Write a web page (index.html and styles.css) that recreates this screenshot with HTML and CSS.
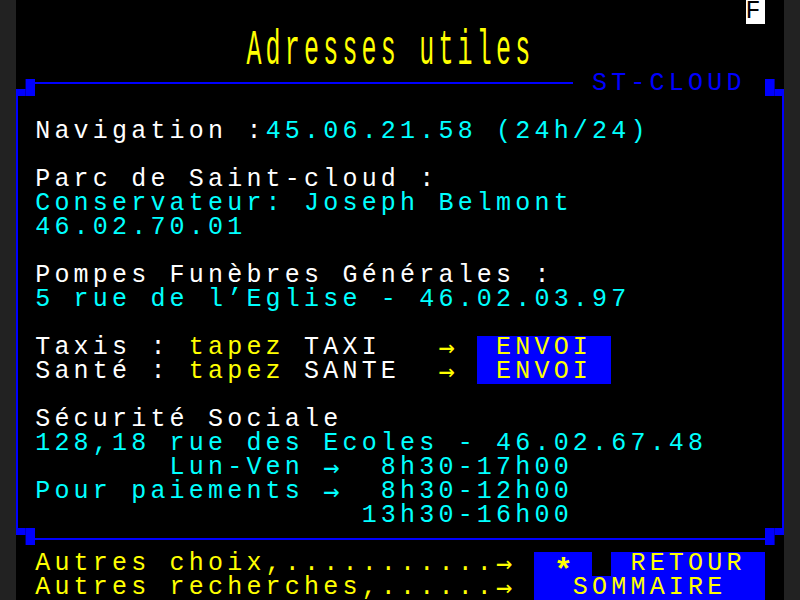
FILE: index.html
```html
<!DOCTYPE html>
<html lang="fr">
<head>
<meta charset="utf-8">
<title>Adresses utiles</title>
<link rel="stylesheet" href="styles.css">
</head>
<body>
<div class="screen">
  <div class="line status"><span class="fkey">F</span></div>
  <div class="title"><span class="title-text">Adresses utiles</span></div>

  <div class="frame-row">
    <svg class="corner" viewBox="0 0 19.2 24" width="19.2" height="24"><rect x="9.6" y="7" width="9.6" height="17"/><rect x="0" y="17" width="9.6" height="7"/></svg>
    <div class="hline top-line"></div>
    <div class="cell"></div>
    <div class="label">ST-CLOUD</div>
    <div class="cell"></div>
    <svg class="corner" viewBox="0 0 19.2 24" width="19.2" height="24"><rect x="0" y="7" width="9.6" height="17"/><rect x="9.6" y="17" width="9.6" height="7"/></svg>
  </div>

  <div class="panel">
    <div class="line"></div>
    <div class="line"><span class="w">Navigation :</span><span class="c">45.06.21.58 (24h/24)</span></div>
    <div class="line"></div>
    <div class="line w">Parc de Saint-cloud :</div>
    <div class="line c">Conservateur: Joseph Belmont</div>
    <div class="line c">46.02.70.01</div>
    <div class="line"></div>
    <div class="line w">Pompes Funèbres Générales :</div>
    <div class="line c">5 rue de l’Eglise - 46.02.03.97</div>
    <div class="line"></div>
    <div class="line"><span class="w">Taxis : </span><span class="y">tapez</span><span class="w"> TAXI   </span><span class="y"><span class="arr">→</span> </span><span class="btn"> ENVOI </span></div>
    <div class="line"><span class="w">Santé : </span><span class="y">tapez</span><span class="w"> SANTE  </span><span class="y"><span class="arr">→</span> </span><span class="btn"> ENVOI </span></div>
    <div class="line"></div>
    <div class="line w">Sécurité Sociale</div>
    <div class="line c">128,18 rue des Ecoles - 46.02.67.48</div>
    <div class="line c">       Lun-Ven <span class="arr">→</span>  8h30-17h00</div>
    <div class="line c">Pour paiements <span class="arr">→</span>  8h30-12h00</div>
    <div class="line c">                 13h30-16h00</div>
  </div>

  <div class="frame-row">
    <svg class="corner" viewBox="0 0 19.2 24" width="19.2" height="24"><rect x="0" y="0" width="9.6" height="7"/><rect x="9.6" y="0" width="9.6" height="17"/></svg>
    <div class="hline grow"></div>
    <svg class="corner" viewBox="0 0 19.2 24" width="19.2" height="24"><rect x="0" y="0" width="9.6" height="17"/><rect x="9.6" y="0" width="9.6" height="7"/></svg>
  </div>

  <div class="line foot y">Autres choix,...........<span class="arr">→</span> <span class="btn"> <span class="star">*</span> </span><span class="blank"> </span><span class="btn"> RETOUR </span></div>
  <div class="line foot y">Autres recherches,......<span class="arr">→</span> <span class="btn">  SOMMAIRE  </span></div>
</div>
</body>
</html>
```

FILE: styles.css
```css
html, body {
  margin: 0;
  padding: 0;
  background: #222222;
}

.screen {
  width: 768px;
  height: 600px;
  margin: 0 auto;
  background: #000000;
  overflow: hidden;
  font-family: "Liberation Mono", "DejaVu Sans Mono", monospace;
  font-size: 25px;
  letter-spacing: 4.2px;
  line-height: 24px;
  color: #ffffff;
}

.line {
  height: 24px;
  padding-left: 19.2px;
  white-space: pre;
}

.status {
  padding-left: 729.6px;
}

.fkey {
  display: inline-block;
  height: 24px;
  vertical-align: top;
  background: #ffffff;
  color: #000000;
}

.title {
  height: 48px;
  padding-left: 230.4px;
  color: #ffff00;
  white-space: pre;
}

.title-text {
  display: inline-block;
  margin-top: 4px;
  transform: scaleY(2);
  transform-origin: 0 0;
}

.frame-row {
  display: flex;
  height: 24px;
}

.corner {
  flex: none;
  display: block;
  fill: #0000ff;
}

.hline {
  height: 24px;
  background: linear-gradient(#0000ff, #0000ff) no-repeat 0 10px / 100% 2px;
}

.top-line {
  flex: none;
  width: 537.6px;
}

.grow {
  flex: 1;
}

.cell {
  flex: none;
  width: 19.2px;
}

.label {
  flex: none;
  width: 153.6px;
  color: #0000ff;
  white-space: pre;
}

.panel {
  height: 432px;
  box-sizing: border-box;
  border-left: 2px solid #0000ff;
  border-right: 2px solid #0000ff;
}

.panel .line {
  padding-left: 17.2px;
}

.w { color: #ffffff; }
.c { color: #00ffff; }
.y { color: #ffff00; }

.arr {
  display: inline-block;
  width: 19.2px;
  height: 24px;
  vertical-align: top;
  line-height: 22px;
  letter-spacing: 0;
  font-family: "DejaVu Sans Mono", monospace;
  font-size: 27px;
  text-align: left;
}

.star {
  display: inline-block;
  width: 19.2px;
  height: 24px;
  line-height: 40px;
  vertical-align: top;
  letter-spacing: 0;
  font-size: 32px;
  font-weight: bold;
  text-align: left;
}

.btn {
  display: inline-block;
  height: 24px;
  vertical-align: top;
  background: #0000ff;
  color: #ffff00;
}

.blank {
  display: inline-block;
  height: 24px;
  vertical-align: top;
}
```
